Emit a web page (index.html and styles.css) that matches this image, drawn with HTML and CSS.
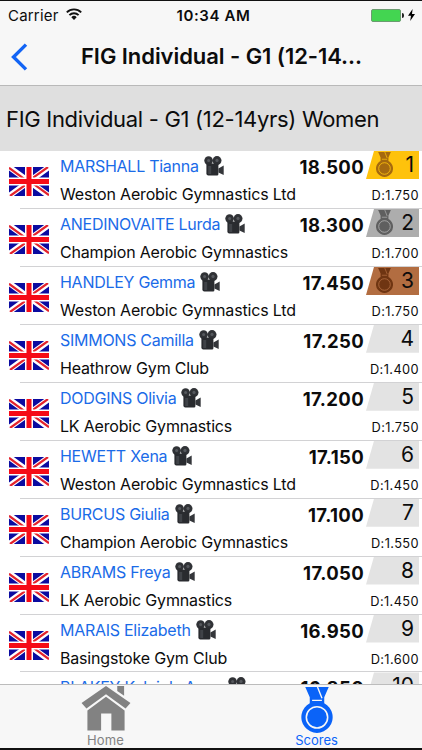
FILE: index.html
```
<!DOCTYPE html>
<html lang="en">
<head>
    <meta charset="UTF-8">
    <meta name="viewport" content="width=device-width, initial-scale=1.0">
    <title>Scores</title>

    <!-- style -->
    <link rel="stylesheet" href="styles.css">
</head>
<body>
    <!-- shared icons -->
    <svg class="defs">
        <symbol id="flag" viewBox="0 0 40 29">
            <path fill="#0b0ba0" d="M0 0h40v29H0z"/>
            <path stroke="#fff" stroke-width="5.6" d="M0 0l40 29M40 0L0 29"/>
            <path stroke="#e3222c" stroke-width="2.2" d="M0 .8l20 14.5M40 28.2L20 13.7M39 0L20 13.7M1 29l19-13.7"/>
            <path stroke="#fff" stroke-width="8" d="M20 0v29M0 14.5h40"/>
            <path stroke="#f50b16" stroke-width="5" d="M20 0v29M0 14.5h40"/>
        </symbol>
        <symbol id="camera" viewBox="0 0 20 20">
            <circle cx="4.6" cy="4.6" r="4.3" fill="#303236"/>
            <circle cx="13" cy="4.6" r="4.5" fill="#303236"/>
            <circle cx="4.6" cy="4.4" r="1.5" fill="#56595e"/>
            <circle cx="13" cy="4.4" r="1.6" fill="#56595e"/>
            <path fill="#292b2f" d="M2.4 7.500h12v10.700a1.4 1.4 0 0 1-1.4 1.4H4.400a2 2 0 0 1-2-2z"/>
            <path fill="#404348" d="M4.2 10h3v8h-3z"/>
            <path fill="#34363a" d="M14.4 12.5l5.3-3v9.500l-5.3-2.400z"/>
        </symbol>
        <symbol id="medal" viewBox="0 0 32 47">
            <path d="M4 0h24l-4.6 10.5v6.2a16 16 0 1 1-14.8 0v-6.2z"/>
            <circle cx="16" cy="31" r="10.9" fill="none" stroke="var(--gap)" stroke-width="1.6"/>
            <path fill="none" stroke="var(--gap)" stroke-width="1.4" d="M11 13.6h10M16.500 0l4.600 11.500"/>
        </symbol>
    </svg>

    <div class="phone">
        <div class="status">
            <div class="carrier">
                <span>Carrier</span>
                <svg class="wifi" viewBox="0 0 16 12">
                    <path fill="none" stroke="#111" stroke-width="1.9" d="M.8 4.4a10.2 10.2 0 0 1 14.4 0M3.4 7.1a6.5 6.5 0 0 1 9.2 0"/>
                    <path fill="#111" d="M8 12L5.3 9.2a3.8 3.8 0 0 1 5.4 0z"/>
                </svg>
            </div>
            <div class="clock">10:34 AM</div>
            <div class="power">
                <div class="battery"></div>
                <svg class="bolt" viewBox="0 0 7 12"><path d="M4.6 0L0 6.8h3L2.2 12 7 5H4z"/></svg>
            </div>
        </div>

        <div class="navbar">
            <svg class="back" viewBox="0 0 17 28"><path d="M15 1.6L2.5 14 15 26.4"/></svg>
            <h1>FIG Individual - G1 (12-14...</h1>
        </div>

        <h2>FIG Individual - G1 (12-14yrs) Women</h2>

        <div class="list">
            <div class="row">
                <svg class="flag"><use href="#flag"/></svg>
                <div class="info">
                    <div class="name"><a>MARSHALL Tianna</a><svg class="camera"><use href="#camera"/></svg></div>
                    <div class="club">Weston Aerobic Gymnastics Ltd</div>
                </div>
                <div class="score">18.500</div>
                <div class="result">
                    <div class="rank gold"><svg class="medal"><use href="#medal"/></svg>1</div>
                    <div class="diff">D:1.750</div>
                </div>
            </div>
            <div class="row">
                <svg class="flag"><use href="#flag"/></svg>
                <div class="info">
                    <div class="name"><a>ANEDINOVAITE Lurda</a><svg class="camera"><use href="#camera"/></svg></div>
                    <div class="club">Champion Aerobic Gymnastics</div>
                </div>
                <div class="score">18.300</div>
                <div class="result">
                    <div class="rank silver"><svg class="medal"><use href="#medal"/></svg>2</div>
                    <div class="diff">D:1.700</div>
                </div>
            </div>
            <div class="row">
                <svg class="flag"><use href="#flag"/></svg>
                <div class="info">
                    <div class="name"><a>HANDLEY Gemma</a><svg class="camera"><use href="#camera"/></svg></div>
                    <div class="club">Weston Aerobic Gymnastics Ltd</div>
                </div>
                <div class="score">17.450</div>
                <div class="result">
                    <div class="rank bronze"><svg class="medal"><use href="#medal"/></svg>3</div>
                    <div class="diff">D:1.750</div>
                </div>
            </div>
            <div class="row">
                <svg class="flag"><use href="#flag"/></svg>
                <div class="info">
                    <div class="name"><a>SIMMONS Camilla</a><svg class="camera"><use href="#camera"/></svg></div>
                    <div class="club">Heathrow Gym Club</div>
                </div>
                <div class="score">17.250</div>
                <div class="result">
                    <div class="rank">4</div>
                    <div class="diff">D:1.400</div>
                </div>
            </div>
            <div class="row">
                <svg class="flag"><use href="#flag"/></svg>
                <div class="info">
                    <div class="name"><a>DODGINS Olivia</a><svg class="camera"><use href="#camera"/></svg></div>
                    <div class="club">LK Aerobic Gymnastics</div>
                </div>
                <div class="score">17.200</div>
                <div class="result">
                    <div class="rank">5</div>
                    <div class="diff">D:1.750</div>
                </div>
            </div>
            <div class="row">
                <svg class="flag"><use href="#flag"/></svg>
                <div class="info">
                    <div class="name"><a>HEWETT Xena</a><svg class="camera"><use href="#camera"/></svg></div>
                    <div class="club">Weston Aerobic Gymnastics Ltd</div>
                </div>
                <div class="score">17.150</div>
                <div class="result">
                    <div class="rank">6</div>
                    <div class="diff">D:1.450</div>
                </div>
            </div>
            <div class="row">
                <svg class="flag"><use href="#flag"/></svg>
                <div class="info">
                    <div class="name"><a>BURCUS Giulia</a><svg class="camera"><use href="#camera"/></svg></div>
                    <div class="club">Champion Aerobic Gymnastics</div>
                </div>
                <div class="score">17.100</div>
                <div class="result">
                    <div class="rank">7</div>
                    <div class="diff">D:1.550</div>
                </div>
            </div>
            <div class="row">
                <svg class="flag"><use href="#flag"/></svg>
                <div class="info">
                    <div class="name"><a>ABRAMS Freya</a><svg class="camera"><use href="#camera"/></svg></div>
                    <div class="club">LK Aerobic Gymnastics</div>
                </div>
                <div class="score">17.050</div>
                <div class="result">
                    <div class="rank">8</div>
                    <div class="diff">D:1.450</div>
                </div>
            </div>
            <div class="row">
                <svg class="flag"><use href="#flag"/></svg>
                <div class="info">
                    <div class="name"><a>MARAIS Elizabeth</a><svg class="camera"><use href="#camera"/></svg></div>
                    <div class="club">Basingstoke Gym Club</div>
                </div>
                <div class="score">16.950</div>
                <div class="result">
                    <div class="rank">9</div>
                    <div class="diff">D:1.600</div>
                </div>
            </div>
            <div class="row">
                <svg class="flag"><use href="#flag"/></svg>
                <div class="info">
                    <div class="name"><a>BLAKEY Keleigh-Anne</a><svg class="camera"><use href="#camera"/></svg></div>
                </div>
                <div class="score">16.850</div>
                <div class="result">
                    <div class="rank">10</div>
                </div>
            </div>
        </div>

        <div class="tabs">
            <div class="tab">
                <svg class="home" viewBox="0 0 50 46">
                    <path d="M25 0l25 17.5-5 5.5L25 8.5 5 23l-5-5.5zM36.5 0h7v10l-7-4.8z"/>
                    <path d="M25 11l19 14v20.5H30.5V28H20v17.5H6V25z"/>
                </svg>
                <span>Home</span>
            </div>
            <div class="tab active">
                <svg class="scores"><use href="#medal"/></svg>
                <span>Scores</span>
            </div>
        </div>
    </div>
</body>
</html>
```
FILE: styles.css
```
* {
    box-sizing: border-box;
}
body {
    margin: 0;
    font-family: Inter, "Liberation Sans", sans-serif;
    color: #0c0c0c;
    background-color: #ffffff;
}
.defs {
    display: none;
}
.phone {
    display: flex;
    flex-direction: column;
    width: 422px;
    height: 750px;
    overflow: hidden;
    border-top: 1px solid #111;
    border-bottom: 2px solid #111;
}

/* top bars */
.status {
    display: grid;
    grid-template-columns: 1fr auto 1fr;
    align-items: center;
    height: 27px;
    flex: none;
    padding: 1px 7px 0 8px;
    background-color: #f7f7f7;
    font-size: 15px;
}
.carrier {
    display: flex;
    align-items: center;
    gap: 7px;
    letter-spacing: 0.2px;
}
.wifi {
    width: 16px;
    height: 12px;
    margin-top: -3px;
}
.clock {
    font-weight: 600;
    font-size: 15px;
    letter-spacing: 0.6px;
    padding-left: 4px;
}
.power {
    display: flex;
    justify-content: flex-end;
    align-items: center;
    gap: 7px;
}
.battery {
    position: relative;
    width: 30px;
    height: 13px;
    background-color: #43d551;
    border: 1px solid #6b9b70;
    border-radius: 2px;
}
.battery::after {
    content: "";
    position: absolute;
    right: -4px;
    top: 3px;
    width: 2px;
    height: 5px;
    border-radius: 0 2px 2px 0;
    background-color: #222;
}
.bolt {
    width: 7px;
    height: 12px;
}
.navbar {
    display: flex;
    align-items: center;
    height: 58px;
    flex: none;
    padding-left: 11px;
    background-color: #f7f7f7;
    border-bottom: 1px solid #b9b9b9;
}
.back {
    width: 17px;
    height: 28px;
}
.back path {
    fill: none;
    stroke: #1264f5;
    stroke-width: 3.4;
}
h1 {
    margin: -2px 0 0 53px;
    font-size: 22px;
    font-weight: 600;
    letter-spacing: -0.06px;
    white-space: nowrap;
}
h2 {
    margin: 0;
    height: 65px;
    line-height: 66px;
    flex: none;
    padding-left: 6px;
    background-color: #dfdfdf;
    font-size: 22px;
    font-weight: 400;
    letter-spacing: -0.3px;
    white-space: nowrap;
}

/* results */
.list {
    flex: 1;
    min-height: 0;
    overflow: hidden;
}
.row {
    position: relative;
    display: flex;
    height: 57.95px;
    padding: 0 3px 0 9px;
    white-space: nowrap;
}
.row::after {
    content: "";
    position: absolute;
    left: 20px;
    right: 0;
    bottom: 0;
    height: 1px;
    background-color: #d2d2d4;
}
.flag {
    width: 40px;
    height: 29px;
    margin: 16px 11px 0 0;
}
.info {
    flex: 1;
    font-size: 16px;
    letter-spacing: -0.18px;
}
.name {
    display: flex;
    height: 29px;
    line-height: 30px;
}
.name a {
    color: #1a6be8;
    letter-spacing: -0.27px;
}
.camera {
    width: 20px;
    height: 20px;
    margin: 5px 0 0 5px;
}
.club {
    line-height: 29px;
}
.score {
    font-size: 18.5px;
    font-weight: 700;
    letter-spacing: 0.35px;
    line-height: 33px;
    margin-right: 2px;
}
.result {
    width: 53px;
    text-align: right;
}
.rank {
    --gap: #e3e3e3;
    display: flex;
    justify-content: flex-end;
    height: 28px;
    line-height: 27px;
    padding-right: 5px;
    font-size: 21px;
    background-color: var(--gap);
    clip-path: polygon(8px 0, 100% 0, 100% 100%, 0 100%);
}
.medal {
    width: 17px;
    height: 25px;
    margin: 1px auto 0 10px;
}
.gold {
    --gap: #fec20c;
    fill: #a5690f;
}
.silver {
    --gap: #adadad;
    fill: #5f5f5f;
}
.bronze {
    --gap: #b26d41;
    fill: #6f3512;
}
.diff {
    font-size: 12.8px;
    letter-spacing: 0.4px;
    line-height: 34px;
}

/* bottom tabs */
.tabs {
    display: flex;
    height: 64px;
    flex: none;
    background-color: #f7f7f7;
    border-top: 1px solid #bcbcbc;
}
.tab {
    flex: 1;
    display: flex;
    flex-direction: column;
    align-items: center;
    color: #828282;
    fill: #828282;
    font-size: 13px;
    letter-spacing: 0.2px;
}
.tab span {
    line-height: 16px;
}
.tab.active {
    --gap: #f7f7f7;
    color: #0a63f8;
    fill: #0a63f8;
    letter-spacing: 0;
}
.home {
    width: 50px;
    height: 46px;
    margin: 1px 0;
}
.scores {
    width: 32px;
    height: 47px;
    margin-top: 2px;
    margin-bottom: -1px;
}
```
